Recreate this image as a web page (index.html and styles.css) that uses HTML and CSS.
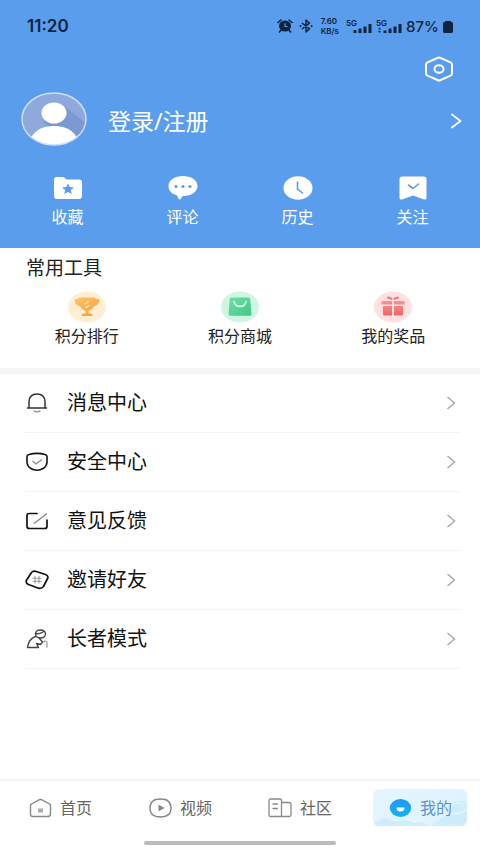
FILE: index.html
```html
<!DOCTYPE html>
<html lang="zh-CN">
<head>
<meta charset="utf-8">
<meta name="viewport" content="width=device-width, initial-scale=1">
<title>我的</title>
<link rel="stylesheet" href="styles.css">
</head>
<body>
<div class="page">
  <header class="hero">
    <div class="status">
      <span class="status-time">11:20</span>
      <div class="status-icons">
        <svg class="status-alarm" width="16" height="14" viewBox="0 0 16 14" aria-hidden="true">
          <path d="M1 3.500 4 1M15 3.500 12 1M4 11 2.500 13M12 11l1.500 2" fill="none" stroke="currentColor" stroke-width="1.600" stroke-linecap="round"/>
          <ellipse cx="8" cy="7" rx="6" ry="5.600" fill="currentColor"/>
          <path d="M8 4.200V7.500h2.600" fill="none" stroke="#5a9dec" stroke-width="1.200"/>
        </svg>
        <svg width="14" height="14" viewBox="0 0 14 14" aria-hidden="true">
          <path d="M3 4 10.500 9.800 7 13V1l3.500 3.200L3 10" fill="none" stroke="currentColor" stroke-width="1.500" stroke-linejoin="round"/>
          <circle cx="1.500" cy="7" r="1" fill="currentColor"/><circle cx="12.600" cy="7" r="1" fill="currentColor"/>
        </svg>
        <span class="status-speed"><span>7.60</span><span>KB/s</span></span>
        <span class="signal">
          <span class="signal-tag">5G</span>
          <svg width="19" height="10" viewBox="0 0 19 10" aria-hidden="true"><path d="M.5 7h3v3h-3zM5.500 5.500h3V10h-3zM10.500 3.500h3V10h-3zM15.500 1h3v9h-3z" fill="currentColor"/></svg>
        </span>
        <span class="signal signal-second">
          <span class="signal-tag">5G</span>
          <svg width="24" height="10" viewBox="0 0 24 10" aria-hidden="true"><path d="M0 6.500 1.500 4.500 3 6.500zM0 8 1.500 10 3 8zM5.500 7.500h3V10h-3zM10.500 5.500h3V10h-3zM15.500 3.500h3V10h-3zM20.500 1h3v9h-3z" fill="currentColor"/></svg>
        </span>
        <span class="status-battery">87%</span>
        <svg width="10" height="13" viewBox="0 0 10 13" aria-hidden="true"><path d="M2 1h6v1h.5A1.500 1.500 0 0 1 10 3.500v8A1.500 1.500 0 0 1 8.500 13h-7A1.500 1.500 0 0 1 0 11.500v-8A1.500 1.500 0 0 1 1.500 2H2z" fill="currentColor"/></svg>
      </div>
    </div>

    <div class="toolbar">
      <button class="settings" type="button" aria-label="设置">
        <svg width="30" height="26" viewBox="0 0 30 26" fill="none" stroke="currentColor" stroke-width="2" aria-hidden="true">
          <path d="M13.400 2Q15 1.200 16.600 2L26.500 6.300Q28 7 28 8.600v8.800q0 1.600-1.500 2.300L16.600 24q-1.600.8-3.200 0L3.500 19.700Q2 19 2 17.400V8.600Q2 7 3.500 6.300z" stroke-linejoin="round"/>
          <ellipse cx="15" cy="13" rx="4.500" ry="3.800"/>
        </svg>
      </button>
    </div>

    <a class="profile" href="#login">
      <svg class="avatar" width="66" height="54" viewBox="0 0 66 54" aria-hidden="true">
        <defs><clipPath id="avatar-clip"><ellipse cx="33" cy="27" rx="32" ry="26"/></clipPath></defs>
        <g clip-path="url(#avatar-clip)">
          <path d="M0 0h66v54H0z" fill="#8fa9dc"/>
          <path d="M42 13 66 32v22H50L22 30z" fill="#7d99d3"/>
          <ellipse cx="33" cy="21" rx="12.500" ry="10.500" fill="#fff"/>
          <path d="M10 54V46Q16 34 33 34t23 12v8z" fill="#fff"/>
        </g>
        <ellipse cx="33" cy="27" rx="32" ry="26" fill="none" stroke="#cfe2fa" stroke-width="1.400"/>
      </svg>
      <span class="profile-name">登录/注册</span>
      <svg width="12" height="16" viewBox="0 0 12 16" fill="none" stroke="currentColor" stroke-width="1.800" stroke-linecap="round" stroke-linejoin="round" aria-hidden="true"><path d="M2 1.500 10.500 8 2 14.500"/></svg>
    </a>

    <nav class="shortcuts" aria-label="快捷入口">
      <a class="shortcut" href="#favorites">
        <svg width="30" height="24" viewBox="0 0 30 24" aria-hidden="true">
          <path d="M3.500 1h6q1.500 0 2.500 1l1.500 1.500H26q3 0 3 3V20q0 3-3 3H4q-3 0-3-3V3.500Q1 1 3.500 1z" fill="#fff"/>
          <path d="m15 7.500 1.700 3.500 4.300.4-3.200 2.700 1 3.900-3.800-2-3.800 2 1-3.900L9 11.400l4.300-.4z" fill="#5a9dec"/>
        </svg>
        <span>收藏</span>
      </a>
      <a class="shortcut" href="#comments">
        <svg width="30" height="24" viewBox="0 0 30 24" aria-hidden="true">
          <path d="M15 0C23 0 29.500 4 29.500 10S23 20 15.500 20q-1.500 0-2 1.500-.5 2-1.500 2t-2-1.500l-1-2.500C4 18 .5 15 .5 10 .5 4 7 0 15 0z" fill="#fff"/>
          <circle cx="8" cy="10.500" r="1.600" fill="#5a9dec"/><circle cx="15" cy="10.500" r="1.600" fill="#5a9dec"/><circle cx="22" cy="10.500" r="1.600" fill="#5a9dec"/>
        </svg>
        <span>评论</span>
      </a>
      <a class="shortcut" href="#history">
        <svg width="30" height="24" viewBox="0 0 30 24" aria-hidden="true">
          <ellipse cx="15" cy="12" rx="14.500" ry="11.800" fill="#fff"/>
          <path d="M14.500 6v7l5 4" fill="none" stroke="#5a9dec" stroke-width="1.600" stroke-linecap="round"/>
        </svg>
        <span>历史</span>
      </a>
      <a class="shortcut" href="#following">
        <svg width="30" height="24" viewBox="0 0 30 24" aria-hidden="true">
          <path d="M4.500.5h21q3 0 3 2.500v19q0 2-2.500 1.500L15 19.500 4 23.500q-2.500.5-2.500-1.500V3q0-2.500 3-2.500z" fill="#fff"/>
          <path d="m10.500 9 4.500 3.500L20.500 8" fill="none" stroke="#5a9dec" stroke-width="1.600" stroke-linecap="round" stroke-linejoin="round"/>
        </svg>
        <span>关注</span>
      </a>
    </nav>
  </header>

  <main class="content">
    <section class="tools">
      <h2 class="tools-title">常用工具</h2>
      <div class="tools-grid">
        <a class="tool" href="#ranking">
          <svg width="38" height="32" viewBox="0 0 38 32" aria-hidden="true">
            <defs><linearGradient id="gold" x1="0" y1="0" x2="1" y2="1"><stop stop-color="#ffc46b"/><stop offset="1" stop-color="#f99d35"/></linearGradient></defs>
            <ellipse cx="19" cy="16" rx="19" ry="15.500" fill="#ffefd2"/>
            <path d="M12 6.500h14q1.500 0 2 1.500h2.500q1 0 .8 2-.6 4-5.300 5.500-2 3.500-5.500 4.500v2.500h2.500q1.500 0 1.500 2.500H13.500q0-2.500 1.500-2.500h2.500V20q-3.500-1-5.500-4.500Q7.300 14 6.700 10q-.2-2 .8-2H10q.5-1.500 2-1.500z" fill="url(#gold)"/>
            <path d="m16.500 13.500 4-3m-3 6.500 4-3" stroke="#ffe9c4" stroke-width="1.500"/>
          </svg>
          <span>积分排行</span>
        </a>
        <a class="tool" href="#mall">
          <svg width="38" height="32" viewBox="0 0 38 32" aria-hidden="true">
            <defs><linearGradient id="green" x1="0" y1="0" x2="1" y2="1"><stop stop-color="#72dca5"/><stop offset="1" stop-color="#42c98a"/></linearGradient></defs>
            <ellipse cx="19" cy="16" rx="19" ry="15.500" fill="#cff6e1"/>
            <path d="M10.500 6.500h17q1.500 0 1.700 1.500L30.500 23q0 1.700-1.500 1.700H9Q7.500 24.700 7.500 23L8.800 8Q9 6.500 10.500 6.500z" fill="url(#green)"/>
            <path d="M13 10.500q1 5 6 5t6-5" fill="none" stroke="#ddfbea" stroke-width="1.500" stroke-linecap="round"/>
          </svg>
          <span>积分商城</span>
        </a>
        <a class="tool" href="#prizes">
          <svg width="38" height="32" viewBox="0 0 38 32" aria-hidden="true">
            <defs><linearGradient id="red" x1="0" y1="0" x2="0" y2="1"><stop stop-color="#fb9292"/><stop offset="1" stop-color="#f06464"/></linearGradient></defs>
            <ellipse cx="19" cy="16" rx="19" ry="15.500" fill="#ffe1e1"/>
            <path d="M8 10h10v3.500H7.500V10.500zM20 10h10l.5.500v3H20zM9 15h9v9.500h-7.500Q9 24.500 9 23zM20 15h9v8q0 1.500-1.500 1.500H20z" fill="url(#red)"/>
            <path d="M14 6.500l3.500 1.300M24 6.500l-3.500 1.300" fill="none" stroke="#f27878" stroke-width="2" stroke-linecap="round"/>
          </svg>
          <span>我的奖品</span>
        </a>
      </div>
    </section>

    <ul class="menu">
      <li><a class="menu-row" href="#messages">
        <svg class="menu-icon" viewBox="0 0 24 20" aria-hidden="true">
          <path d="M2.500 15h19M4 15V8.500Q4.500 1 12 1t8 7.500V15" fill="none" stroke="#333" stroke-width="1.500" stroke-linecap="round"/>
          <path d="M9 18q3 1.800 6 0" fill="none" stroke="#888" stroke-width="1.400" stroke-linecap="round"/>
        </svg>
        <span class="menu-label">消息中心</span>
        <svg class="menu-arrow" viewBox="0 0 10 14" aria-hidden="true"><path d="M1.500 1 8.500 7l-7 6"/></svg>
      </a></li>
      <li><a class="menu-row" href="#security">
        <svg class="menu-icon" viewBox="0 0 24 20" aria-hidden="true">
          <path d="M4 2.500Q12 .2 20 2.500q2 .5 2 2v6q-.5 4-3.500 5.700-6.500 4-13 0Q2.500 14.500 2 10.500v-6q0-1.500 2-2z" fill="none" stroke="currentColor" stroke-width="1.600" stroke-linejoin="round"/>
          <path d="m7.500 9 3.500 3 6-4.500" fill="none" stroke="#888" stroke-width="1.300"/>
        </svg>
        <span class="menu-label">安全中心</span>
        <svg class="menu-arrow" viewBox="0 0 10 14" aria-hidden="true"><path d="M1.500 1 8.500 7l-7 6"/></svg>
      </a></li>
      <li><a class="menu-row" href="#feedback">
        <svg class="menu-icon" viewBox="0 0 24 20" aria-hidden="true">
          <path d="M12 2.500H4.500Q2 2.500 2 4.500v11q0 2 2.500 2h15q2.500 0 2.500-2V9" fill="none" stroke="currentColor" stroke-width="1.700" stroke-linecap="round"/>
          <path d="M9 12.500 22 2.500" stroke="#888" stroke-width="1.400"/>
        </svg>
        <span class="menu-label">意见反馈</span>
        <svg class="menu-arrow" viewBox="0 0 10 14" aria-hidden="true"><path d="M1.500 1 8.500 7l-7 6"/></svg>
      </a></li>
      <li><a class="menu-row" href="#invite">
        <svg class="menu-icon" viewBox="0 0 24 20" aria-hidden="true">
          <path d="M6.500 2.500Q8 .8 10.500 1.300L20.500 4.500q3 1.200 2.300 3.500L18.500 16.500q-2 2.300-5 1.700L3.500 14.500Q.5 13 1.300 10.500z" fill="none" stroke="currentColor" stroke-width="1.700" stroke-linejoin="round"/>
          <path d="M10 6v7.500M14 6v7.500M7.500 8.300h9M7.500 11.300h9" stroke="#999" stroke-width="1.100"/>
        </svg>
        <span class="menu-label">邀请好友</span>
        <svg class="menu-arrow" viewBox="0 0 10 14" aria-hidden="true"><path d="M1.500 1 8.500 7l-7 6"/></svg>
      </a></li>
      <li><a class="menu-row" href="#senior">
        <svg class="menu-icon" viewBox="0 0 24 20" aria-hidden="true">
          <g fill="none" stroke="#444" stroke-width="1.400" stroke-linecap="round" stroke-linejoin="round">
            <ellipse cx="15.500" cy="5" rx="5" ry="4"/>
            <path d="M10.500 5q5 0 8.500-2.500M10.500 7.500Q3.500 10 2.500 18.500H13.500l-2-4 4 1 2-2.500-3-3.500"/>
          </g>
          <path d="M18 13q4-2 4 1v4.500" fill="none" stroke="#999" stroke-width="1.200"/>
        </svg>
        <span class="menu-label">长者模式</span>
        <svg class="menu-arrow" viewBox="0 0 10 14" aria-hidden="true"><path d="M1.500 1 8.500 7l-7 6"/></svg>
      </a></li>
    </ul>
  </main>

  <footer class="footer">
    <nav class="tabs" aria-label="主导航">
      <a class="tab" href="#home">
        <svg width="24" height="20" viewBox="0 0 24 20" fill="none" aria-hidden="true">
          <path d="M2.500 7.500Q2.500 6.500 3.500 6L11.500 1.700q1-.5 2 0L21.500 6q1 .5 1 1.500V16q0 2.500-2.500 2.500H5Q2.500 18.500 2.500 16z" stroke="currentColor" stroke-width="1.400" stroke-linejoin="round"/>
          <path d="M10 10.500h5v4h-5z" fill="#aaa"/>
        </svg>
        <span>首页</span>
      </a>
      <a class="tab" href="#video">
        <svg width="24" height="20" viewBox="0 0 24 20" aria-hidden="true">
          <path d="M12.500 1Q23 1 23 10t-10.500 9T2 10 12.500 1z" fill="none" stroke="currentColor" stroke-width="1.400"/>
          <path d="M10.500 6.500 16.500 10l-6 3.500z" fill="currentColor"/>
        </svg>
        <span>视频</span>
      </a>
      <a class="tab" href="#community">
        <svg width="24" height="20" viewBox="0 0 24 20" fill="none" stroke="currentColor" stroke-width="1.300" stroke-linecap="round" aria-hidden="true">
          <path d="M13.500 18.500h-11q-1.500 0-1.500-1.500V2.500Q1 1 2.500 1H12q1.500 0 1.500 1.500zM13.500 4.500H21q2 0 2 1.500v11q0 1.500-2 1.500h-7.500M5 6h4.500M5 10.500h4.500"/>
        </svg>
        <span>社区</span>
      </a>
      <a class="tab tab-active" href="#mine" aria-current="page">
        <svg class="tab-waves" viewBox="0 0 94 37" preserveAspectRatio="none" aria-hidden="true">
          <path d="M0 34q6-6 12-6t10 4q8-3 14 0t12 1l8 4H0z" fill="#cdecfc"/>
          <path d="M58 37q8-10 16-12 0-12 10-13 8-1 10 3v22z" fill="#cdecfc"/>
          <path d="M2 33q8-6 14-3t12 1 14 2M62 34q8-9 16-9t16-4M77 22q0-8 8-8 5 0 4 4" fill="none" stroke="#edf8fe" stroke-width="1"/>
        </svg>
        <svg width="24" height="20" viewBox="0 0 24 20" aria-hidden="true">
          <defs><linearGradient id="face" x1="0" y1="0" x2="0" y2="1"><stop stop-color="#1f98ee"/><stop offset="1" stop-color="#12b4f8"/></linearGradient></defs>
          <ellipse cx="12.500" cy="10" rx="10.700" ry="9" fill="url(#face)"/>
          <path d="M8.500 9.500h8q0 4-4 4t-4-4z" fill="#fff"/>
        </svg>
        <span>我的</span>
      </a>
    </nav>
    <div class="home-bar"></div>
  </footer>
</div>
</body>
</html>
```
FILE: styles.css
```css
* {
  box-sizing: border-box;
}

body {
  margin: 0;
  background: #fff;
  color: #222;
  font-family: "Noto Sans", "Noto Sans CJK SC", sans-serif;
}

a {
  color: inherit;
  text-decoration: none;
}

svg {
  display: block;
  flex: none;
}

.page {
  display: flex;
  flex-direction: column;
  min-height: 100vh;
}

.hero {
  padding-bottom: 20px;
  background: #5a9dec;
  color: #fff;
}

.status {
  display: flex;
  align-items: center;
  justify-content: space-between;
  height: 52px;
  padding: 0 27px;
  color: #10243f;
  font-family: Inter, sans-serif;
  font-weight: 600;
}

.status-time {
  font-size: 17px;
}

.status-icons {
  display: flex;
  align-items: center;
  gap: 4px;
}

.status-alarm {
  margin-right: 2px;
}

.status-speed {
  display: flex;
  flex-direction: column;
  margin: 0 3px 0 4px;
  font-size: 8px;
  line-height: 10px;
}

.signal {
  display: flex;
  align-items: flex-end;
  height: 14px;
}

.signal-tag {
  align-self: flex-start;
  margin-right: -4px;
  font-size: 8px;
  line-height: 8px;
}

.signal-second .signal-tag {
  margin-right: -9px;
}

.status-battery {
  font-size: 15px;
  font-weight: 500;
}

.toolbar {
  display: flex;
  justify-content: flex-end;
  height: 40px;
  padding: 4px 26px 0;
}

.settings {
  height: 26px;
  padding: 0;
  border: 0;
  background: none;
  color: #fff;
}

.profile {
  display: flex;
  align-items: center;
  padding: 0 18px 0 21px;
}

.profile > :not(.avatar) {
  margin-top: 4px;
}

.profile-name {
  flex: 1;
  margin-left: 21px;
  font-size: 23px;
  line-height: 32px;
}

.shortcuts {
  display: flex;
  padding: 30px 10px 0;
}

.shortcut {
  display: flex;
  flex: 1;
  flex-direction: column;
  align-items: center;
  gap: 6px;
  font-size: 16px;
  line-height: 22px;
}

.content {
  flex: 1;
}

.tools {
  padding-bottom: 21px;
  border-bottom: 6px solid #f5f5f5;
}

.tools-title {
  margin: 0;
  padding: 6px 26px 0;
  font-size: 19px;
  font-weight: 400;
  line-height: 28px;
}

.tools-grid {
  display: flex;
  padding: 9px 10px 0;
}

.tool {
  display: flex;
  flex: 1;
  flex-direction: column;
  align-items: center;
  gap: 2px;
  font-size: 16px;
  line-height: 22px;
}

.menu {
  margin: 0;
  padding: 0 20px 0 25px;
  list-style: none;
}

.menu-row {
  display: flex;
  align-items: center;
  height: 59px;
  border-bottom: 1px solid #f3f3f3;
  color: #111;
}

.menu-icon {
  width: 24px;
  height: 20px;
}

.menu-label {
  flex: 1;
  margin-left: 18px;
  font-size: 20px;
  line-height: 28px;
}

.menu-arrow {
  width: 10px;
  height: 14px;
  margin-right: 4px;
  fill: none;
  stroke: #aaa;
  stroke-width: 1.5;
}

.footer {
  border-top: 2px solid #f3f3f3;
}

.tabs {
  display: flex;
  padding-top: 8px;
}

.tab {
  position: relative;
  display: flex;
  flex: 1;
  align-items: center;
  justify-content: center;
  gap: 8px;
  height: 37px;
  margin: 0 13px;
  color: #888;
  font-size: 16px;
  line-height: 22px;
}

.tab span {
  position: relative;
  color: #666;
}

.tab svg {
  position: relative;
}

.tab-active {
  overflow: hidden;
  border-radius: 6px;
  background: linear-gradient(100deg, #e4f5fe, #dff3fe);
}

.tab-active span {
  color: #5b93cf;
}

.tab .tab-waves {
  position: absolute;
  inset: 0;
  width: 100%;
  height: 100%;
}

.home-bar {
  width: 40%;
  height: 4px;
  margin: 15px auto 8px;
  border-radius: 2px;
  background: #bbb;
}
```
